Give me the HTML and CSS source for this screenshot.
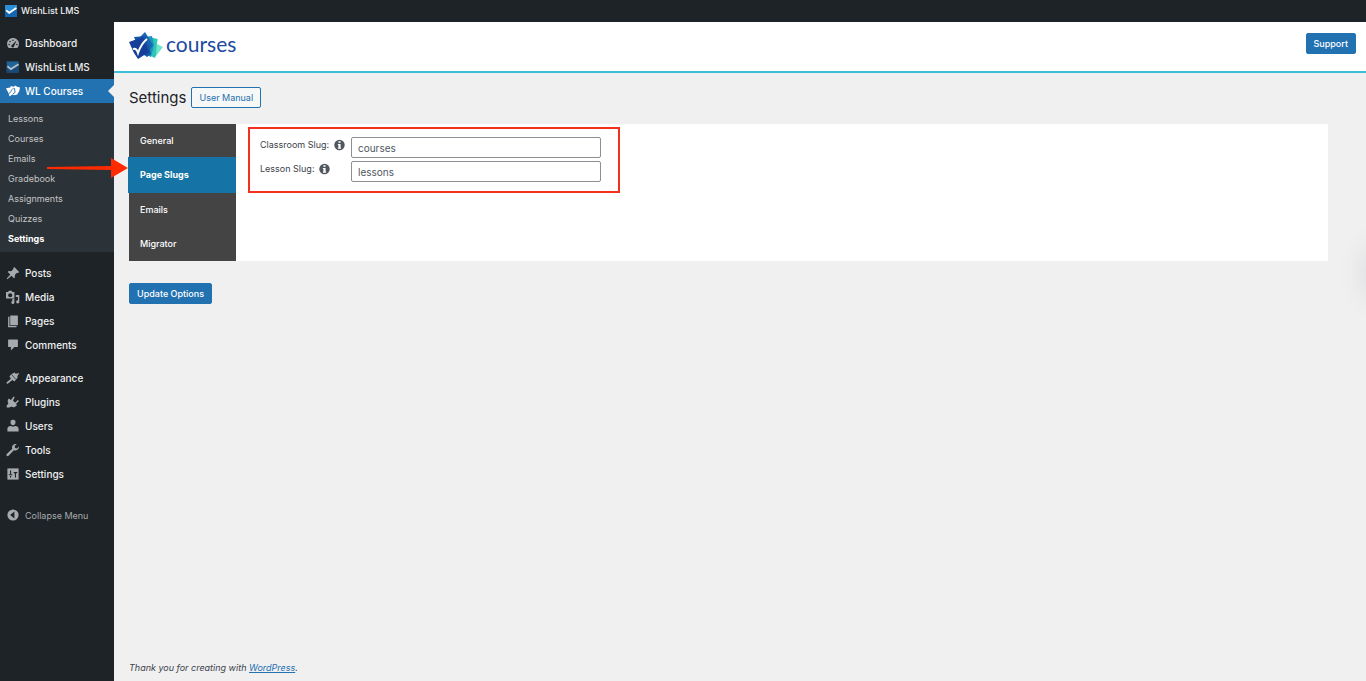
FILE: index.html
```html
<!DOCTYPE html>
<html lang="en">
<head>
    <meta charset="UTF-8">
    <meta name="viewport" content="width=device-width, initial-scale=1.0">
    <title>Settings - WishList LMS</title>
    <link rel="stylesheet" href="styles.css">
</head>
<body>
    <header class="adminbar">
        <a href="#" class="adminbar-site">
            <svg class="site-icon" viewBox="0 0 20 20">
                <rect width="20" height="20" fill="#2a8fd8"/>
                <path d="M0 9l7 6L20 5v15H0z" fill="#1467b0"/>
                <path d="M2 9l5 4L19 5" fill="none" stroke="#fff" stroke-width="3"/>
            </svg>
            WishList LMS
        </a>
    </header>

    <div class="layout">
        <nav class="sidebar">
            <ul class="menu">
                <li>
                    <a href="#" class="menu-link">
                        <svg class="icon" viewBox="0 0 20 20">
                            <path d="M3.8 17h12.4a8.600 8.600 0 0 0 2.300-5.600C18.500 6.500 14.700 3 10 3S1.500 6.500 1.500 11.400A8.600 8.600 0 0 0 3.800 17z" fill="currentColor"/>
                            <g fill="#1d2327">
                                <circle cx="10" cy="6" r="1.100"/>
                                <circle cx="5.800" cy="7.800" r="1.100"/>
                                <circle cx="4.500" cy="12" r="1.100"/>
                                <circle cx="15.500" cy="12" r="1.100"/>
                                <path d="M15 6.500l-3.500 8a2 2 0 1 1-2.600-2z"/>
                            </g>
                        </svg>
                        Dashboard
                    </a>
                </li>
                <li>
                    <a href="#" class="menu-link">
                        <svg class="icon" viewBox="0 0 20 20">
                            <rect x="1" y="2" width="17" height="16" fill="#1f6496"/>
                            <path d="M1 9l6 6L18 6v12H1z" fill="#174a78"/>
                            <path d="M2 9l5 4 11-7" fill="none" stroke="#b4bec6" stroke-width="2.500"/>
                        </svg>
                        WishList LMS
                    </a>
                </li>
                <li>
                    <a href="#" class="menu-link current">
                        <svg class="icon" viewBox="0 0 20 20">
                            <path d="M0 6l6-1 1-2 4 1 2-2 3 2 4 1-1 5-3 5-4 1-3-1-4 3-1-4z" fill="#fff"/>
                            <path d="M4 13c3 1 3-6 7-7M12 6l1 6-3 2" fill="none" stroke="#2271b1" stroke-width="1.300"/>
                        </svg>
                        WL Courses
                    </a>
                    <ul class="submenu">
                        <li><a href="#">Lessons</a></li>
                        <li><a href="#">Courses</a></li>
                        <li><a href="#">Emails</a></li>
                        <li><a href="#">Gradebook</a></li>
                        <li><a href="#">Assignments</a></li>
                        <li><a href="#">Quizzes</a></li>
                        <li><a href="#" class="current">Settings</a></li>
                    </ul>
                </li>
            </ul>

            <ul class="menu">
                <li>
                    <a href="#" class="menu-link">
                        <svg class="icon" viewBox="0 0 20 20">
                            <path d="M10.400 3l1.400-1.400 7 7-1.400 1.400-1.600-.4-3.300 3.200.3 3.400-1.300 1.300-3.700-3.700L2 19l-1-1 5.200-5.800L2.500 8.500l1.300-1.300 3.600.2 3.200-3.200z" fill="currentColor"/>
                        </svg>
                        Posts
                    </a>
                </li>
                <li>
                    <a href="#" class="menu-link">
                        <svg class="icon" viewBox="0 0 20 20">
                            <path fill-rule="evenodd" d="M0 3h3l1-2h4l1 2h3v9H0zM6 4.500a3 3 0 1 0 0 6 3 3 0 0 0 0-6z" fill="currentColor"/>
                            <path d="M14 7h5v10a2.300 2.300 0 1 1-2-2.200V10h-3zM9 13h3v5a2.200 2.200 0 1 1-3-2.200z" fill="currentColor"/>
                        </svg>
                        Media
                    </a>
                </li>
                <li>
                    <a href="#" class="menu-link">
                        <svg class="icon" viewBox="0 0 20 20">
                            <path d="M6 2h11v14H6zM3 4h2v13h10v2H3z" fill="currentColor"/>
                        </svg>
                        Pages
                    </a>
                </li>
                <li>
                    <a href="#" class="menu-link">
                        <svg class="icon" viewBox="0 0 20 20">
                            <path d="M4 2h12a1 1 0 0 1 1 1v9a1 1 0 0 1-1 1h-4l-5 5v-5H4a1 1 0 0 1-1-1V3a1 1 0 0 1 1-1z" fill="currentColor"/>
                        </svg>
                        Comments
                    </a>
                </li>
            </ul>

            <ul class="menu">
                <li>
                    <a href="#" class="menu-link">
                        <svg class="icon" viewBox="0 0 20 20">
                            <path d="M7 5l5-3 2 2 5-1-3 5 1 1-5 6-3-2-6 5c-1 1-3-1-2-2l6-5-2-3z" fill="currentColor"/>
                            <path d="M8 5l6 7" stroke="#1d2327" stroke-width="1"/>
                        </svg>
                        Appearance
                    </a>
                </li>
                <li>
                    <a href="#" class="menu-link">
                        <svg class="icon" viewBox="0 0 20 20">
                            <path d="M4 5l3 2 4-5 1.500 1L10 8l3 3 4-4 1.500 1.500-4 4 1 2.500c-3 3-6 3-8 1.500L5 18H1v-3l2.500-3C2 10 2 7 4 5z" fill="currentColor"/>
                        </svg>
                        Plugins
                    </a>
                </li>
                <li>
                    <a href="#" class="menu-link">
                        <svg class="icon" viewBox="0 0 20 20">
                            <path d="M10 1a3.500 3.500 0 0 1 3.500 4c0 2.500-1.500 4-3.500 4S6.500 7.500 6.500 5A3.500 3.500 0 0 1 10 1zM2 18v-4c0-2 2-4 5-4l3 1 3-1c3 0 5 2 5 4v4z" fill="currentColor"/>
                        </svg>
                        Users
                    </a>
                </li>
                <li>
                    <a href="#" class="menu-link">
                        <svg class="icon" viewBox="0 0 20 20">
                            <path d="M16.700 9.300a5 5 0 0 1-5.500 1.100l-7.500 7.900a1.800 1.800 0 0 1-2.600-2.600l7.900-7.500a5 5 0 0 1 6.300-6.600l-3 3 .7 2.600 2.600.7 3-3a5 5 0 0 1-1.900 4.400z" fill="currentColor"/>
                        </svg>
                        Tools
                    </a>
                </li>
                <li>
                    <a href="#" class="menu-link">
                        <svg class="icon" viewBox="0 0 20 20">
                            <rect x="2" y="2" width="16" height="16" fill="currentColor"/>
                            <path d="M6.500 5v5M13.500 9v6M4 11h5M11 8h5M6.500 13v2" stroke="#1d2327" stroke-width="1.600"/>
                        </svg>
                        Settings
                    </a>
                </li>
            </ul>

            <button type="button" class="menu-link collapse">
                <svg class="icon" viewBox="0 0 20 20">
                    <circle cx="10" cy="10" r="8" fill="currentColor"/>
                    <path d="M12 5v10l-6-5z" fill="#1d2327"/>
                </svg>
                Collapse Menu
            </button>
        </nav>

        <main class="content">
            <div class="brandbar">
                <a href="#" class="brand">
                    <svg class="brand-mark" viewBox="0 0 34 28">
                        <path d="M23 6l6 1-1 5 6 3-7 9-10-2z" fill="#6fe6cb"/>
                        <path d="M20 5l8 2-1 16-1 3-9-4z" fill="#2fc4b8"/>
                        <path d="M15 5l8-1 2 9-3 12-8-4z" fill="#1f93bd"/>
                        <path d="M10 6l6-6 8 13-5 8-6 2z" fill="#1a66b4"/>
                        <path d="M5 5l12-1 5 18-4 3-7-5z" fill="#1557a8"/>
                        <path d="M0 10l14-5 6 15-11 7-4-6z" fill="#153f98"/>
                        <path d="M4 17c3-1 4 1 5 4 2-6 4-10 9-14" fill="none" stroke="#fff" stroke-width="2"/>
                    </svg>
                    courses
                </a>
                <button type="button" class="button primary">Support</button>
            </div>

            <div class="wrap">
                <div class="heading">
                    <h1>Settings</h1>
                    <button type="button" class="button">User Manual</button>
                </div>

                <form id="settings">
                    <div class="panel">
                        <ul class="tabs">
                            <li><a href="#">General</a></li>
                            <li class="active">
                                <a href="#">Page Slugs</a>
                                <svg class="arrow" viewBox="0 0 81 22">
                                    <path d="M0 10l64-1V1l17 10-17 10v-8L0 12z" fill="#ff2a00"/>
                                </svg>
                            </li>
                            <li><a href="#">Emails</a></li>
                            <li><a href="#">Migrator</a></li>
                        </ul>
                        <div class="fields">
                            <div class="field">
                                <label for="classroom">Classroom Slug:
                                    <svg class="info" viewBox="0 0 20 20">
                                        <circle cx="10" cy="10" r="9.500" fill="currentColor"/>
                                        <path d="M8 3h4v3H8zM7 8h5v7h1v2H7v-2h1v-5H7z" fill="#fff"/>
                                    </svg>
                                </label>
                                <input type="text" id="classroom" value="courses">
                            </div>
                            <div class="field">
                                <label for="lesson">Lesson Slug:
                                    <svg class="info" viewBox="0 0 20 20">
                                        <circle cx="10" cy="10" r="9.500" fill="currentColor"/>
                                        <path d="M8 3h4v3H8zM7 8h5v7h1v2H7v-2h1v-5H7z" fill="#fff"/>
                                    </svg>
                                </label>
                                <input type="text" id="lesson" value="lessons">
                            </div>
                        </div>
                    </div>
                    <button type="submit" class="button primary">Update Options</button>
                </form>
            </div>

            <footer class="footer">Thank you for creating with <a href="#">WordPress</a>.</footer>
        </main>
    </div>

    <div class="drawer"></div>
</body>
</html>
```
FILE: styles.css
```css
* {
    box-sizing: border-box;
}
body {
    display: flex;
    flex-direction: column;
    min-height: 100vh;
    margin: 0;
    font-family: Inter, sans-serif;
    font-size: 10px;
    line-height: 20px;
    color: #3c434a;
    background-color: #f0f0f1;
}
ul {
    list-style: none;
    margin: 0;
    padding: 0;
}
a {
    color: #2271b1;
}
button, input {
    font-family: inherit;
    font-size: 10px;
}

/* Top bar */
.adminbar {
    height: 22px;
    padding: 0 5px;
    background-color: #1d2327;
}
.adminbar-site {
    display: flex;
    align-items: center;
    gap: 4px;
    height: 22px;
    color: #f0f0f1;
    font-weight: 500;
    font-size: 9px;
    text-decoration: none;
}
.site-icon {
    width: 12px;
    height: 12px;
}

.layout {
    display: flex;
    flex: 1;
}

/* Sidebar */
.sidebar {
    flex: 0 0 114px;
    padding-top: 9px;
    background-color: #1d2327;
}
.menu {
    margin-bottom: 9px;
}
.menu-link {
    position: relative;
    display: flex;
    align-items: center;
    gap: 5px;
    height: 24px;
    padding: 0 6px;
    color: #f0f0f1;
    font-weight: 500;
    text-decoration: none;
}
.menu-link.current {
    color: #fff;
    background-color: #2271b1;
}
.menu-link.current::after {
    content: "";
    position: absolute;
    right: 0;
    top: 6px;
    border: 6px solid transparent;
    border-left-width: 0;
    border-right-color: #f0f0f1;
}
.icon {
    width: 14px;
    height: 14px;
    color: #a7aaad;
}
.submenu {
    padding: 6px 0 3px;
    background-color: #2c3338;
}
.submenu a {
    display: block;
    padding: 0 8px;
    color: #c3c4c7;
    font-size: 9px;
    text-decoration: none;
}
.submenu a.current {
    color: #fff;
    font-weight: 700;
}
.collapse {
    margin-top: 17px;
    color: #a7aaad;
    font-weight: 400;
    font-size: 9px;
    background: none;
    border: none;
    cursor: pointer;
}

/* Main column */
.content {
    display: flex;
    flex: 1;
    flex-direction: column;
    min-width: 0;
}
.brandbar {
    display: flex;
    justify-content: space-between;
    align-items: center;
    height: 51px;
    padding: 0 10px 6px 15px;
    background-color: #fff;
    border-bottom: 2px solid #3ebfd8;
}
.brand {
    display: flex;
    align-items: center;
    gap: 3px;
    color: #2149a0;
    font-family: Lato, sans-serif;
    font-size: 21px;
    text-decoration: none;
}
.brand-mark {
    width: 34px;
    height: 28px;
    margin-top: 4px;
}
.button {
    height: 21px;
    padding: 0 7px;
    color: #2271b1;
    font-size: 9px;
    line-height: 19px;
    background-color: #f6f7f7;
    border: 1px solid #2271b1;
    border-radius: 2px;
    cursor: pointer;
}
.button.primary {
    color: #fff;
    font-weight: 500;
    background-color: #2271b1;
}
.wrap {
    padding: 14px 38px 0 15px;
}
.heading {
    display: flex;
    align-items: center;
    gap: 5px;
    margin-bottom: 16px;
}
h1 {
    margin: 0;
    color: #1d2327;
    font-size: 15px;
    font-weight: 400;
}

/* Tabbed panel */
.panel {
    display: flex;
    margin-bottom: 22px;
    background-color: #fff;
}
.tabs {
    flex: 0 0 107px;
    background-color: #444;
}
.tabs a {
    display: block;
    padding: 0 11px;
    color: #fff;
    font-size: 9px;
    font-weight: 500;
    line-height: 34px;
    text-decoration: none;
}
.tabs .active {
    position: relative;
    margin-top: -1px;
    margin-left: -1px;
    background-color: #1574a5;
}
.tabs .active a {
    padding-left: 12px;
    font-weight: 700;
    line-height: 36px;
}
.arrow {
    position: absolute;
    right: 100%;
    top: 0;
    width: 81px;
    height: 22px;
}
.fields {
    display: flex;
    flex-direction: column;
    align-self: flex-start;
    gap: 3px;
    margin: 3px 12px;
    padding: 8px 17px 9px 10px;
    border: 2px solid #f5301c;
}
.field {
    display: flex;
    gap: 3px;
}
label {
    display: flex;
    flex: 0 0 88px;
    gap: 5px;
    line-height: 16px;
    font-size: 9px;
    white-space: nowrap;
}
.info {
    width: 11px;
    height: 16px;
    color: #50575e;
}
input[type="text"] {
    width: 250px;
    height: 21px;
    padding: 0 6px;
    color: #50575e;
    background-color: #fff;
    border: 1px solid #8c8f94;
    border-radius: 2px;
}

.footer {
    margin-top: auto;
    padding: 0 15px 3px;
    font-size: 9px;
    font-style: italic;
}

/* Edge of the closed help drawer */
.drawer {
    position: fixed;
    left: 100%;
    top: 250px;
    width: 40px;
    height: 45px;
    box-shadow: 0 0 30px rgba(0, 0, 30, 0.1);
}
```
